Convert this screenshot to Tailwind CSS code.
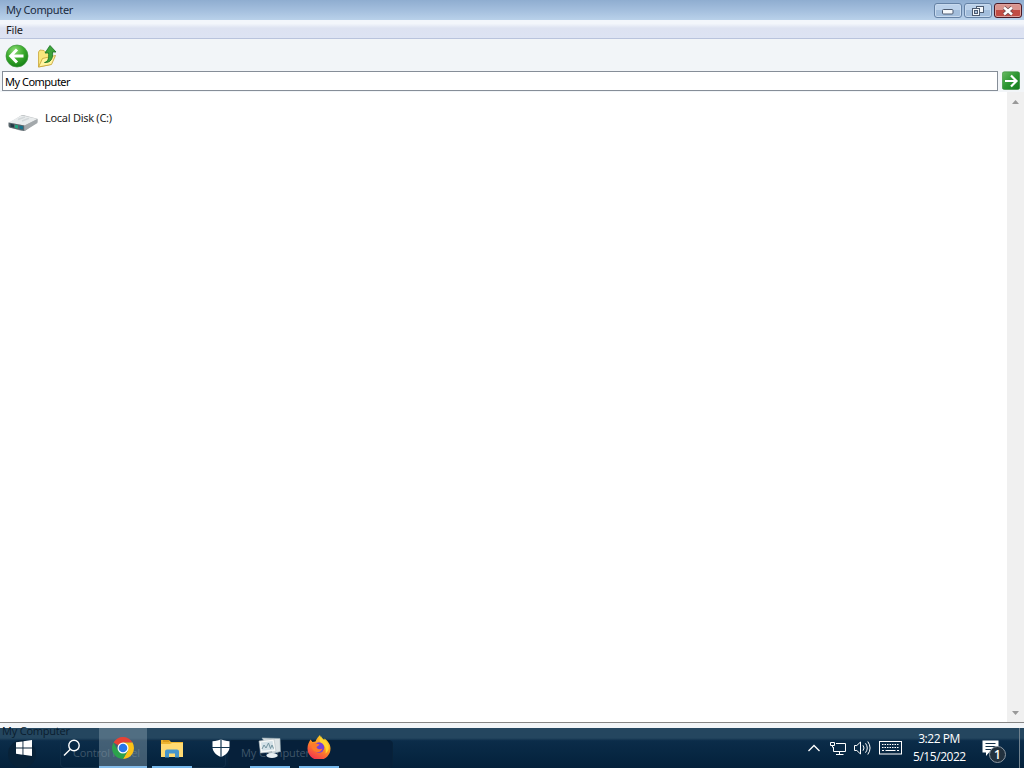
<!DOCTYPE html>
<html lang="en">
<head>
    <meta charset="UTF-8">
    <meta name="viewport" content="width=device-width, initial-scale=1.0">
    <title>My Computer</title>
    <script src="https://cdn.jsdelivr.net/npm/@tailwindcss/browser@4"></script>
</head>
<body class="h-screen overflow-hidden bg-white font-['Noto_Sans',sans-serif] text-[11px] text-[#1c1c1c]">
    <div class="flex h-screen flex-col">

        <!-- Title bar -->
        <header class="flex h-5 shrink-0 items-start justify-between bg-linear-to-b from-[#8fadd0] via-[#a3bedd] to-[#b9d1ea] pl-1.5">
            <h1 class="leading-5 tracking-[-0.33px] text-[#1b2b40]">My Computer</h1>
            <div class="flex gap-0.5 pt-[3px] pr-0.5">
                <button class="flex h-[15px] w-7 items-center justify-center rounded-[3px] border border-[#6582a5] bg-linear-to-b from-[#bbd1ea] from-50% to-[#a3bedc] to-50% inset-shadow-[0_0_0_1px_#c8daee]">
                    <svg class="mt-0.5" width="12" height="6" viewBox="0 0 12 6"><rect x=".5" y=".5" width="10.5" height="4.5" rx="1" fill="#f5f8fb" stroke="#4d5b70"/></svg>
                </button>
                <button class="flex h-[15px] w-7 items-center justify-center rounded-[3px] border border-[#6582a5] bg-linear-to-b from-[#bbd1ea] from-50% to-[#a3bedc] to-50% inset-shadow-[0_0_0_1px_#c8daee]">
                    <svg width="12" height="12" viewBox="0 0 12 12" fill="#f5f8fb" stroke="#4d5b70"><rect x="4.500" y="1.500" width="7" height="6"/><rect x=".5" y="3.500" width="7" height="7"/><rect x="2.500" y="5.500" width="3" height="3" fill="#a9c2df"/></svg>
                </button>
                <button class="flex h-[15px] w-7 items-center justify-center rounded-[3px] border border-[#4b1a26] bg-linear-to-b from-[#d9948e] from-50% to-[#c14c44] to-50% inset-shadow-[0_0_0_1px_#dda09b]">
                    <svg width="14" height="10" viewBox="0 0 14 10" fill="none"><path d="M3 1.500l8 7M11 1.500l-8 7" stroke="#6c484c" stroke-width="4"/><path d="M3 1.500l8 7M11 1.500l-8 7" stroke="#fff" stroke-width="2.500"/></svg>
                </button>
            </div>
        </header>

        <!-- Menu bar -->
        <nav class="h-[19px] shrink-0 border-b border-[#b9c3dc] bg-linear-to-b from-[#f3f6fb] from-20% via-[#dde2f1] via-45% to-[#dde3f3] pl-1.5 leading-5 tracking-[-0.2px]">File</nav>

        <!-- Toolbar -->
        <div class="flex h-8 shrink-0 items-center gap-2 bg-[#f2f5f8] pt-0.5 pl-[5px]">
            <svg width="24" height="24" viewBox="0 0 24 24">
                <defs><radialGradient id="back" cx=".4" cy=".25" r=".8"><stop offset="0" stop-color="#8ddc75"/><stop offset=".5" stop-color="#3bab2d"/><stop offset="1" stop-color="#117d13"/></radialGradient></defs>
                <circle cx="12" cy="12" r="11" fill="url(#back)" stroke="#3d953c" stroke-width=".7"/>
                <path d="M12 5.500L5.700 12l6.300 6.500M6.500 12H18.500" fill="none" stroke="#fff" stroke-width="3"/>
            </svg>
            <svg width="21" height="24" viewBox="0 0 21 24">
                <path d="M1.500 8l1.500-2 4 .5 1.500 1.500 5 .5v12l-12 2.500z" fill="#f8e67c" stroke="#c9a53a" stroke-width=".8"/>
                <path d="M1.500 23l4-8.500 13-3-4 9z" fill="#fff4a0" stroke="#c4a034" stroke-width=".8"/>
                <path d="M7.500 18.500c4-1 4.500-5 4-9.500H8L13 1.500 19 8h-3.500c.8 6-1.500 11-8 10.500z" fill="#3da43a" stroke="#16701f" stroke-width=".8"/>
            </svg>
        </div>

        <!-- Address bar -->
        <div class="flex h-[21px] shrink-0 items-start gap-1 bg-[#f2f5f8] pl-0.5">
            <div class="h-5 w-[996px] border border-[#868e98] bg-white pl-0.5 leading-5 tracking-[-0.5px] text-black">My Computer</div>
            <svg width="18" height="19" viewBox="0 0 18 19">
                <defs><linearGradient id="go" x2="1" y2="1"><stop stop-color="#69bb63"/><stop offset=".5" stop-color="#2d9632"/><stop offset="1" stop-color="#147b1b"/></linearGradient></defs>
                <rect x=".3" y=".8" width="17.400" height="17.700" rx="2" fill="url(#go)" stroke="#348c38" stroke-width=".6"/>
                <path d="M3 10h11M9 4.500l5.500 5.500L9 15.500" fill="none" stroke="#fff" stroke-width="2.200"/>
            </svg>
        </div>

        <!-- Drive list -->
        <main class="flex h-[630px] shrink-0 justify-between">
            <div class="flex gap-1.5 pt-[18px] pl-[7px]">
                <svg class="mt-[3px]" width="32" height="20" viewBox="0 0 32 20">
                    <path d="M2 10L14 2.500c1-.6 3-.5 4 0l12.500 3.300v3L18 18H14L2 14z" fill="#b9bdbf"/>
                    <path d="M1.500 9.500L13.500 3c1-.5 3-.4 4 0l13 3L17.500 12.500z" fill="#e9eced"/>
                    <path d="M11 6.500l7-2.500M15 8l7-2.700" stroke="#d3d8da" stroke-width="1.500"/>
                    <path d="M1.500 9.500l16 3v5.500L3 14.800q-1.500-.3-1.500-2z" fill="#58656b"/>
                    <path d="M3.500 10.800l3.500.7v3l-3.500-.7z" fill="#233b45"/>
                    <path d="M8 11.700l3 .6v3.200l-3-.6z" fill="#1fa57f"/>
                    <path d="M12.500 12.500l3.500.7v3.300l-3.500-.7z" fill="#17718b"/>
                    <path d="M17.500 12.500l13-6.500v4L17.500 18z" fill="#a3a8ab"/>
                </svg>
                <span class="h-4 leading-4 tracking-[-0.28px]">Local Disk (C:)</span>
            </div>
            <div class="flex w-[17px] flex-col items-center justify-between bg-[#f0f0f0] pt-2 pb-[7px]">
                <svg width="7" height="4" viewBox="0 0 7 4"><path d="M0 4l3.500-4L7 4z" fill="#999"/></svg>
                <svg width="7" height="4" viewBox="0 0 7 4"><path d="M0 0l3.500 4L7 0z" fill="#999"/></svg>
            </div>
        </main>
        <div class="h-1.5 shrink-0 border-t border-[#858585] bg-[#f2f5f8]"></div>

        <!-- Taskbar -->
        <footer class="relative flex h-10 shrink-0 justify-between bg-linear-to-b from-[#24465f] from-25% via-[#0b2c49] via-32% to-[#04213b] font-['Open_Sans','Noto_Sans',sans-serif] text-white">
            <!-- Older desktop showing through the translucent bar -->
            <div class="absolute inset-0 text-[#3f566a]">
                <span class="absolute -top-[5px] left-0.5 leading-4 tracking-[-0.2px] text-[#0a1d2e]">My Computer</span>
                <div class="absolute top-3 left-2 size-7 rounded-full bg-[#082238]"></div>
                <div class="absolute top-3 left-[60px] h-7 w-[166px] rounded-sm border border-[#102e48]"></div>
                <div class="absolute top-3 left-[228px] h-7 w-[165px] rounded-sm border border-[#082239] bg-[#06203a]"></div>
                <span class="absolute top-[17px] left-[73px] leading-4 tracking-[-0.2px]">Control Panel</span>
                <span class="absolute top-[17px] left-[241px] leading-4 tracking-[-0.1px]">My Computer</span>
            </div>

            <div class="relative flex">
                <button class="flex w-12 items-center justify-center">
                    <svg width="16" height="16" viewBox="0 0 16 16" fill="#fff"><path d="M0 2.300l6.500-.9v6.200H0zM7.400 1.300L16 0v7.600H7.400zM0 8.500h6.500v6.200L0 13.800zM7.400 8.500H16V16l-8.600-1.200z"/></svg>
                </button>
                <button class="flex w-[51px] items-center justify-center pr-[3px]">
                    <svg width="18" height="18" viewBox="0 0 18 18" fill="none" stroke="#fff" stroke-width="1.400"><circle cx="11" cy="6.500" r="5.200"/><path d="M7.300 10.200L1 16.500"/></svg>
                </button>
                <button class="flex w-12 items-center justify-center border-b-2 border-[#83bbe9] bg-[#8a9fae]/45 pt-0.5">
                    <svg width="22" height="22" viewBox="0 0 22 22">
                        <path d="M11 11L1.500 5.500A11 11 0 0 1 20.500 5.500H11z" fill="#e54235"/>
                        <path d="M11 11l9.500-5.500A11 11 0 0 1 11 22l4.800-8.300z" fill="#fbc116"/>
                        <path d="M1.500 5.500A11 11 0 0 0 11 22l4.800-8.300H6.200z" fill="#2ba24c"/>
                        <path d="M11 5.500h9.500L16 13z" fill="#fbc116"/>
                        <circle cx="11" cy="11" r="5.500" fill="#fff"/><circle cx="11" cy="11" r="4.300" fill="#2877e8"/>
                    </svg>
                </button>
                <button class="ml-[5px] flex w-10 items-center justify-center border-b-2 border-[#76b9ed] pt-0.5">
                    <svg width="22" height="19" viewBox="0 0 22 19">
                        <path d="M0 1h8l2 2h12v15H0z" fill="#edb531"/><path d="M0 5h9l2-1h11v14H0z" fill="#ffda72"/>
                        <path d="M2 1h6v2H2z" fill="#d99b1d"/>
                        <path d="M4 18.500v-6q0-2 2-2h10q2 0 2 2v6h-4v-4H8v4z" fill="#4695cc"/>
                    </svg>
                </button>
                <button class="flex w-[58px] items-center justify-center">
                    <svg width="18" height="18" viewBox="0 0 18 18"><path d="M9 0c2 1.400 5 2.200 8.500 2.200V8c0 4.500-3.500 8-8.500 10C4 16 .5 12.500.5 8V2.200C4 2.200 7 1.400 9 0z" fill="#fff"/><path d="M9 0v18M0 8.500h18" stroke="#153852" stroke-width="1.200"/></svg>
                </button>
                <button class="flex w-10 items-center justify-center border-b-2 border-[#76b9ed] pt-0.5">
                    <svg width="24" height="22" viewBox="0 0 24 22">
                        <path d="M4 1l18 .5.500 13-8 2z" fill="#dce3e5" stroke="#9caeb6" stroke-width=".6"/>
                        <path d="M1 4l15-2 2 12.500L2.500 16z" fill="#f5f7f6" stroke="#b1bec3" stroke-width=".6"/>
                        <path d="M3 5.500l11.500-1.400L16 12.500 4.200 13.700z" fill="#d3e1e7"/>
                        <path d="M4 12l2-4 2 3 2.500-5 2 5.500L14 8l1.500 3.500" fill="none" stroke="#6b8c99" stroke-width=".9"/>
                        <path d="M10 15l4-1v3.500h-3z" fill="#aab6bc"/><ellipse cx="14" cy="18.500" rx="5.500" ry="2.500" fill="#e9eff1"/>
                    </svg>
                </button>
                <button class="ml-[9px] flex w-10 items-center justify-center border-b-2 border-[#76b9ed]">
                    <svg width="24" height="24" viewBox="0 0 24 24">
                        <defs><linearGradient id="fox" x1=".8" x2=".25" y2="1"><stop stop-color="#ffe226"/><stop offset=".45" stop-color="#ff9421"/><stop offset="1" stop-color="#f22b52"/></linearGradient></defs>
                        <path d="M3.500 4.500L5.500 7l3-.5c1-3 3-5 4.500-6.500.5 2.500 2 4 4 5.500l.5-2c3.500 2.500 6 6 6 10a11.400 11.400 0 0 1-23 0c0-4 1.500-6.500 3-9z" fill="url(#fox)"/>
                        <path d="M14 1c.5 3 6 4.500 7.500 9.500 1 4-1 6.500-3 8 1-5-.5-8-4.500-10.500-2-2-1.500-5 0-7z" fill="#ffd52e"/>
                        <circle cx="12" cy="12.500" r="5.200" fill="#7542d5"/>
                        <path d="M4.500 8.500c3-1.500 5 .5 8 .7-.5 1.800-2.500 1.800-3 3 1 2.500 4 2.500 6 1.300-1 4-6 5-9 2-2-2-2.500-4.500-2-7z" fill="#ff7b29"/>
                    </svg>
                </button>
            </div>

            <!-- System tray -->
            <div class="relative flex items-center">
                <svg class="mr-[9px]" width="14" height="8" viewBox="0 0 14 8" fill="none" stroke="#fff" stroke-width="1.300"><path d="M1.500 7L7 1.500 12.500 7"/></svg>
                <svg class="mr-[7px]" width="17" height="15" viewBox="0 0 17 15" fill="none" stroke="#fff">
                    <path d="M6 2.500h9.500v8H3.500V6M9.500 10.500V13.500M6 13.500h7.500M.5 1.500h4v3h-4zM2.500 4.500V6.500"/>
                </svg>
                <svg class="mr-[7px]" width="18" height="16" viewBox="0 0 18 16" fill="none" stroke="#fff">
                    <path d="M.5 5.500h2.300L6.500 2v12L2.800 10.500H.5zM9 5.300q2 2.700 0 5.400M11.500 3.300q3.500 4.700 0 9.400M13.800 1.500q4.500 6.500 0 13"/>
                </svg>
                <svg class="mr-[11px]" width="23" height="14" viewBox="0 0 23 14" fill="none" stroke="#fff">
                    <rect x=".5" y=".5" width="22" height="12.500"/><path d="M3 3.500h17M3 6.500h17" stroke-dasharray="1.500 1"/><path d="M3 9.500h2M6.500 9.500h10M18 9.500h2"/>
                </svg>
                <div class="w-[52px] pb-0.5 text-center text-[12px] leading-[18px] tracking-[-0.45px] whitespace-nowrap">
                    <div class="mt-0.5">3:22 PM</div>
                    <div>5/15/2022</div>
                </div>
                <div class="relative ml-[17px] h-10 w-[38px] border-r border-[#70818e]">
                    <svg class="mt-3" width="17" height="17" viewBox="0 0 17 17"><path d="M.5.500h16v12H7L4 16v-3.500H.5z" fill="#fff"/><path d="M3.500 3.500h10M3.500 6.500h10M3.500 9.500h7" stroke="#143149"/></svg>
                    <span class="absolute top-[18px] left-[7px] flex size-[17px] items-center justify-center rounded-full border border-[#8c98a2] bg-[#22313e] text-[12px] font-semibold">1</span>
                </div>
                <div class="w-1"></div>
            </div>
        </footer>
    </div>
</body>
</html>
